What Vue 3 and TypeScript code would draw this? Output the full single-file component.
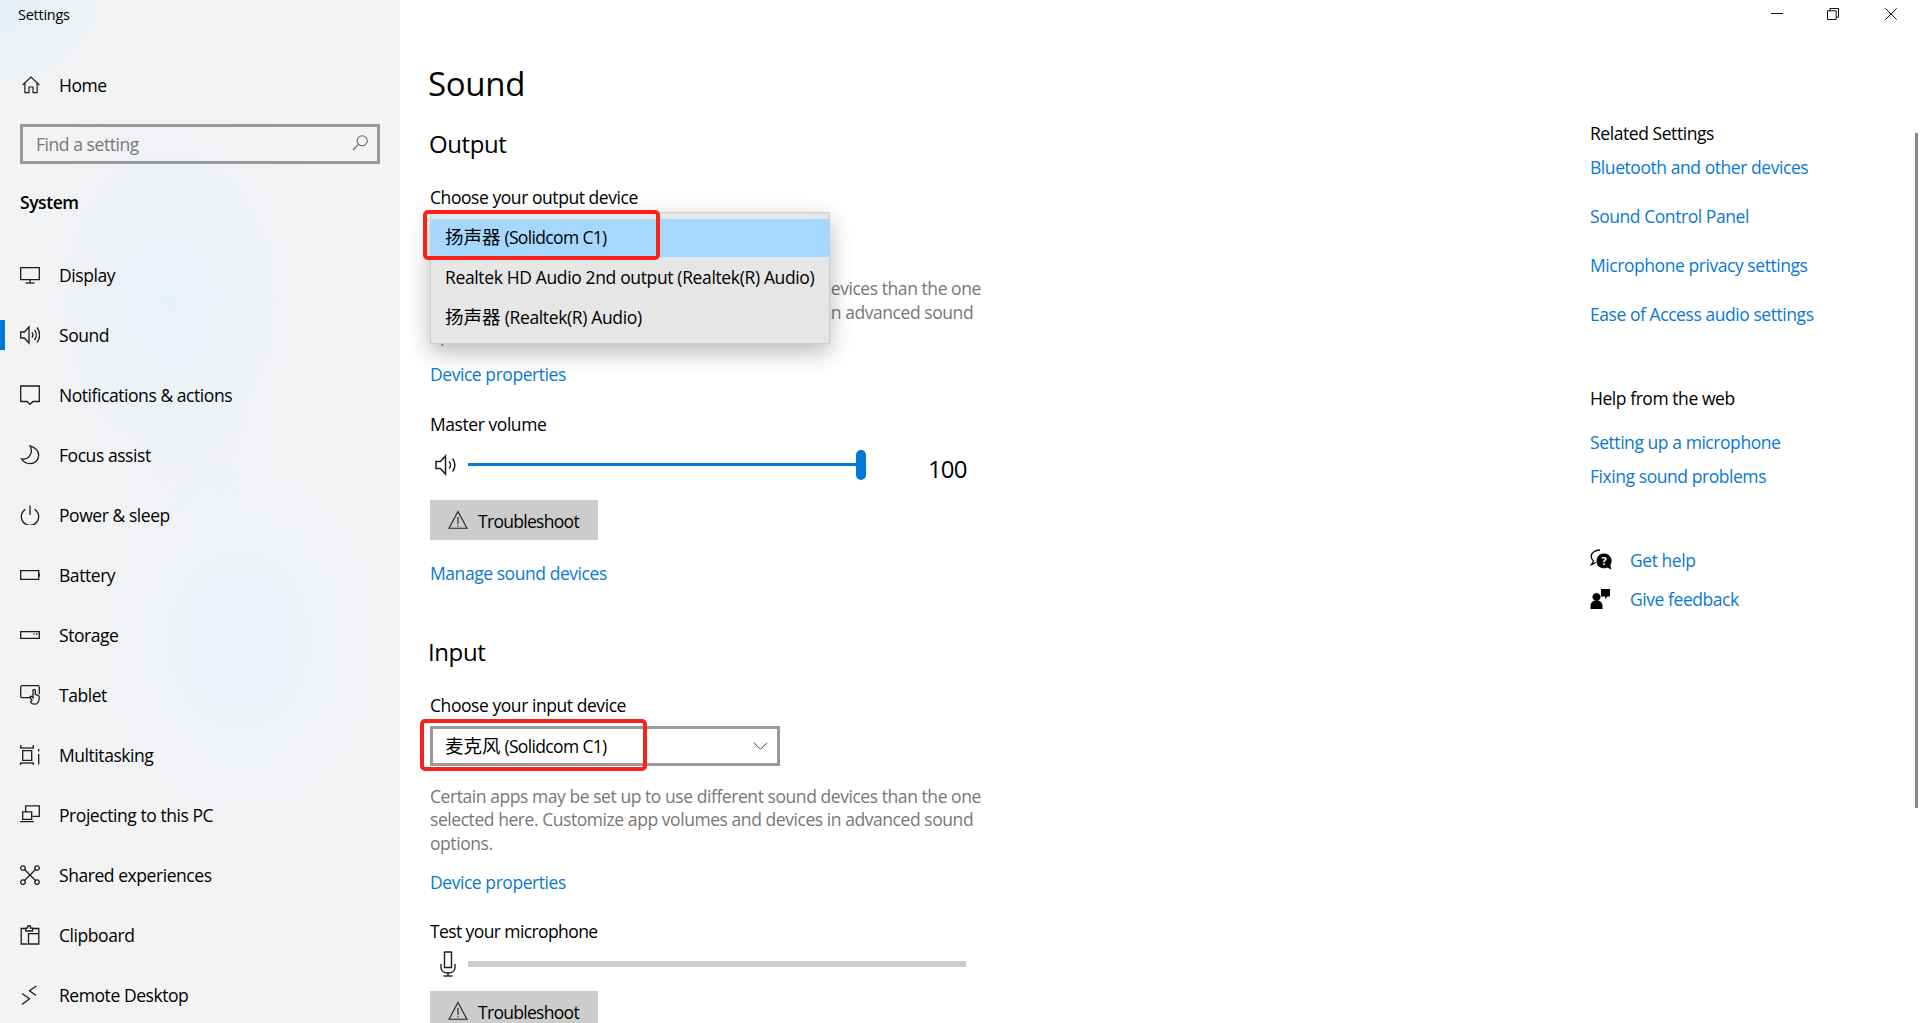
<script setup lang="ts">
interface NavItem { label: string; paths: string[]; active?: boolean }
const nav: NavItem[] = [
  { label: 'Display', paths: ['M.7 2.7h18.600v12H.7z', 'M10 14.700v3', 'M5.500 18h9'] },
  { label: 'Sound', active: true, paths: ['M.7 7h3.600L9 2v16l-4.700-5H.7z', 'M12 7.500a4 4 0 0 1 0 5', 'M14.500 5a8 8 0 0 1 0 10', 'M17 2.500a12 12 0 0 1 0 15'] },
  { label: 'Notifications & actions', paths: ['M.7 1h18.600v15.500H13L10 19.300 7 16.500H.7z'] },
  { label: 'Focus assist', paths: ['M10 .8c3.600 1.200 8.700 3.800 8.700 9.200 0 5-3.900 8.600-8.700 8.600-3.400 0-6.700-1.600-8.400-4.600 6.600 1.400 12.500-5.800 8.400-13.200z'] },
  { label: 'Power & sleep', paths: ['M10 .5v9.500', 'M5.500 4.200a8.700 8.700 0 1 0 9 0'] },
  { label: 'Battery', paths: ['M.7 5.700h18v8.600H.7z', 'M19.300 8.500v3'] },
  { label: 'Storage', paths: ['M.7 6.700h18.600v6.600H.7z', 'M13.500 9h1', 'M16 9h1.500'] },
  { label: 'Tablet', paths: ['M11 12.700H2.200a1.500 1.500 0 0 1-1.500-1.500V2.200A1.500 1.500 0 0 1 2.200.7h15.600a1.500 1.500 0 0 1 1.500 1.500v7', 'M12 15l-1.800-2.200c-.8-1 .6-2 1.500-1.200l1.300 1.200V5.500c0-1.500 2.300-1.500 2.300 0v4l2.400.6c1.400.4 1.800 1.200 1.600 2.600l-.4 2.300c-.4 2.600-2 4.200-4.200 4.200s-3.300-.7-4.200-2.200z'] },
  { label: 'Multitasking', paths: ['M0 3h14', 'M0 18h14', 'M2.700 5.700h9v9.600h-9z', 'M.7 0v3', 'M13.300 0v3', 'M.7 18v2', 'M13.300 18v2', 'M18.700 4v2.500', 'M18.700 9v10.500'] },
  { label: 'Projecting to this PC', paths: ['M5.700 7V.9h13.600v10.400H12.500', 'M2.700 6.800h9v7.500h-9z', 'M.2 16.600h13.600'] },
  { label: 'Shared experiences', paths: ['M4 4l12 12', 'M16 4L4 16', 'M3 .8a2.300 2.300 0 1 0 .01 0z', 'M17 .8a2.300 2.300 0 1 0 .01 0z', 'M3 14.800a2.300 2.300 0 1 0 .01 0z', 'M17 14.800a2.300 2.300 0 1 0 .01 0z'] },
  { label: 'Clipboard', paths: ['M7.500 19H1.200V3.500h4.600', 'M12.500 3.500h6.300V19H8.500V8.700h10.300', 'M5.700 6V3.200h2V1h2.800v2.200h2V6z'] },
  { label: 'Remote Desktop', paths: ['M2 8.500l7.500 5.300-7.500 5.700', 'M16.500 1L9.500 5.800l6.500 4.700'] },
]
const relatedLinks: string[] = ['Bluetooth and other devices', 'Sound Control Panel', 'Microphone privacy settings', 'Ease of Access audio settings']
const warn: string[] = ['M10 1.500L19 18.300H1z', 'M10 7v7', 'M10 15.300v1.200']
const desc = 'Certain apps may be set up to use different sound devices than the one selected here. Customize app volumes and devices in advanced sound options.'
</script>

<template>
  <div class="window">
    <aside class="sidebar">
      <div class="app-title">Settings</div>
      <div class="home">
        <svg class="icon home-icon" viewBox="0 0 20 20"><path d="M.7 10L10 1.300l9.300 8.700" /><path d="M3.200 7.800v10.600h4.600v-6.200h4.400v6.200h4.600V7.800" /></svg>
        <span>Home</span>
      </div>
      <div class="search">
        <span>Find a setting</span>
        <svg class="search-icon" viewBox="0 0 16 16"><path d="M10.200.8a5 5 0 1 0 .01 0z" /><path d="M6.600 9.300L1 15" /></svg>
      </div>
      <div class="system">System</div>
      <nav class="nav">
        <div v-for="item in nav" :key="item.label" class="nav-item" :class="{ active: item.active }">
          <svg class="icon" viewBox="0 0 20 20"><path v-for="d in item.paths" :key="d" :d="d" /></svg>
          <span>{{ item.label }}</span>
        </div>
      </nav>
    </aside>

    <main class="main">
      <h1 class="page-title">Sound</h1>
      <h2 class="section-title">Output</h2>
      <div class="label">Choose your output device</div>
      <div class="select-wrap">
        <div class="select">
          <span class="device"><span class="cjk">扬声器</span> (Solidcom C1)</span>
          <svg class="chev" viewBox="0 0 16 10"><path d="M1 1.500l7 7 7-7" /></svg>
        </div>
        <div class="popup">
          <div class="opt selected"><span class="device"><span class="cjk">扬声器</span> (Solidcom C1)</span></div>
          <div class="opt">Realtek HD Audio 2nd output (Realtek(R) Audio)</div>
          <div class="opt"><span class="cjk">扬声器</span> (Realtek(R) Audio)</div>
        </div>
        <div class="red red-output"></div>
      </div>
      <p class="desc">{{ desc }}</p>
      <a class="link props first-props">Device properties</a>
      <div class="label vol-label master-label">Master volume</div>
      <div class="slider-row">
        <svg class="row-icon" viewBox="0 0 22 22"><path d="M1 7.500h4.400L10.500 2v18l-5.100-5.500H1z" /><path d="M14 7.500a5 5 0 0 1 0 7" /><path d="M17.500 4.500a10 10 0 0 1 0 13" /></svg>
        <div class="track">
          <div class="track-line"></div>
          <div class="thumb"></div>
        </div>
        <span class="value">100</span>
      </div>
      <div class="btn first-btn">
        <svg class="warn" viewBox="0 0 20 20"><path v-for="d in warn" :key="d" :d="d" /></svg>
        <span class="btn-text">Troubleshoot</span>
      </div>
      <a class="link manage">Manage sound devices</a>

      <h2 class="section-title input-title">Input</h2>
      <div class="label">Choose your input device</div>
      <div class="select-wrap">
        <div class="select">
          <span class="device"><span class="cjk">麦克风</span> (Solidcom C1)</span>
          <svg class="chev" viewBox="0 0 16 10"><path d="M1 1.500l7 7 7-7" /></svg>
        </div>
        <div class="red red-input"></div>
      </div>
      <p class="desc">{{ desc }}</p>
      <a class="link props">Device properties</a>
      <div class="label vol-label mic-label">Test your microphone</div>
      <div class="mic-row">
        <svg class="mic" viewBox="0 0 18 26"><path d="M5.500 1h7v15.500h-7z" stroke-linejoin="round" /><path d="M2 13v3.500c0 3.300 3 5.500 7 5.500s7-2.200 7-5.500V13" /><path d="M9 22v3" /><path d="M4.500 25h9" /></svg>
        <div class="level"></div>
      </div>
      <div class="btn second-btn">
        <svg class="warn" viewBox="0 0 20 20"><path v-for="d in warn" :key="d" :d="d" /></svg>
        <span class="btn-text">Troubleshoot</span>
      </div>
    </main>

    <aside class="related">
      <div class="rel-head">Related Settings</div>
      <a v-for="(l, i) in relatedLinks" :key="l" class="link rel-link" :class="{ 'rel-first': i === 0 }">{{ l }}</a>
      <div class="rel-head web-head">Help from the web</div>
      <a class="link web-one">Setting up a microphone</a>
      <a class="link web-two">Fixing sound problems</a>
      <div class="help-row get-help">
        <svg class="help-icon" viewBox="0 0 22 22">
          <path class="thin" d="M10 1c-4.500 0-8.800 2.300-8.800 6.500 0 2 1 3.500 2.400 4.500L1.500 15.500l4.500-2" />
          <path class="solid" d="M14 4.500a7.500 7.500 0 0 0-4.500 13.500 7.500 7.500 0 0 0 7.500.5l4.500 2-1.200-4.300A7.500 7.500 0 0 0 14 4.500z" />
          <text x="14.200" y="16" class="q">?</text>
        </svg>
        <a class="link">Get help</a>
      </div>
      <div class="help-row give-feedback">
        <svg class="help-icon" viewBox="0 0 22 22">
          <path class="solid" d="M11 1h9v7.500h-2.500L15 11V8.500h-4z" />
          <path class="solid" d="M6.500 5a4 4 0 1 1-.01 0z" />
          <path class="solid" d="M.5 21v-3c0-3.500 2.300-5.500 6-5.500s6 2 6 5.500v3z" />
        </svg>
        <a class="link">Give feedback</a>
      </div>
    </aside>

    <div class="caption">
      <svg class="cap min" viewBox="0 0 12 12"><path d="M0 5.500h12" /></svg>
      <svg class="cap restore" viewBox="0 0 12 12"><path d="M.5 2.800h8.700v8.700H.5z" /><path d="M2.800 2.800V.5h8.700v8.700H9.200" /></svg>
      <svg class="cap close" viewBox="0 0 12 12"><path d="M.3.3l11.400 11.400" /><path d="M11.700.3L.3 11.700" /></svg>
    </div>
    <div class="scrollbar"></div>
  </div>
</template>

<style scoped>
.window {
  position: relative;
  display: flex;
  width: 1920px;
  height: 1023px;
  overflow: hidden;
  background: #fff;
  color: #000;
  font-family: "Open Sans", "Noto Sans CJK SC", sans-serif;
  font-size: 17.5px;
  letter-spacing: -0.44px;
  line-height: 24px;
}
.cjk {
  font-size: 18.5px;
  letter-spacing: 0;
}
.device {
  letter-spacing: -0.65px;
}
.device .cjk {
  letter-spacing: 0;
}
.sidebar {
  flex: 0 0 400px;
  box-sizing: border-box;
  background:
    radial-gradient(ellipse 130px 110px at 0 0, #e6eff8 0%, rgba(230, 239, 248, 0) 100%),
    radial-gradient(ellipse 170px 240px at 170px 300px, #eaf0f8 0%, rgba(234, 240, 248, 0) 100%),
    radial-gradient(ellipse 190px 240px at 240px 640px, #ecf1f9 0%, rgba(236, 241, 249, 0) 100%),
    #f3f3f3;
}
.app-title {
  height: 30px;
  line-height: 30px;
  padding-left: 18px;
  font-size: 14.5px;
  letter-spacing: -0.25px;
}
.home {
  display: flex;
  align-items: center;
  height: 60px;
  margin-top: 25px;
  padding-left: 22px;
  gap: 19px;
}
.icon {
  flex: none;
  width: 20px;
  height: 20px;
  fill: none;
  stroke: #1c1c1c;
  stroke-width: 1.3;
}
.home-icon {
  width: 18px;
  height: 18px;
}
.search {
  display: flex;
  align-items: center;
  justify-content: space-between;
  box-sizing: border-box;
  width: 360px;
  height: 40px;
  margin: 9px 0 0 20px;
  padding: 0 9px 0 13px;
  border: 3px solid #999;
  color: #777;
}
.search-icon {
  width: 16px;
  height: 16px;
  margin-bottom: 2px;
  fill: none;
  stroke: #666;
  stroke-width: 1.1;
}
.system {
  height: 40px;
  margin: 18px 0 0 20px;
  line-height: 40px;
  font-weight: 600;
}
.nav {
  margin-top: 23px;
}
.nav-item {
  position: relative;
  display: flex;
  align-items: center;
  height: 60px;
  padding-left: 20px;
  gap: 19px;
}
.nav-item.active::before {
  content: "";
  position: absolute;
  left: 0;
  top: 15px;
  width: 5px;
  height: 30px;
  background: #0078d7;
}
.main {
  flex: 0 0 1190px;
  box-sizing: border-box;
  padding: 53px 0 0 30px;
}
.page-title {
  height: 60px;
  margin: 0 0 0 -2px;
  font-size: 33px;
  font-weight: 400;
  line-height: 62px;
  letter-spacing: -0.3px;
}
.section-title {
  height: 40px;
  margin: 11px 0 0 -1px;
  font-size: 24px;
  font-weight: 400;
  line-height: 40px;
  letter-spacing: -0.4px;
}
.input-title {
  margin-top: 47px;
  margin-left: -2px;
}
.label {
  height: 24px;
  margin-top: 21px;
}
.vol-label {
  margin-top: 25px;
}
.master-label {
  margin-top: 26px;
}
.mic-label {
  letter-spacing: -0.6px;
}
.select-wrap {
  position: relative;
  width: 350px;
  margin-top: 9px;
}
.select {
  display: flex;
  align-items: center;
  justify-content: space-between;
  box-sizing: border-box;
  height: 40px;
  padding: 0 9px 0 12px;
  border: 3px solid #999;
}
.chev {
  width: 15px;
  height: 10px;
  fill: none;
  stroke: #333;
  stroke-width: 1;
}
.popup {
  position: absolute;
  left: 0;
  top: -6px;
  box-sizing: border-box;
  width: 400px;
  height: 132px;
  padding-top: 6px;
  background: #e6e6e6;
  border: 1px solid #ccc;
  box-shadow: 0 8px 22px rgba(0, 0, 0, 0.28);
}
.opt {
  height: 40px;
  padding-left: 14px;
  line-height: 36px;
  white-space: nowrap;
  letter-spacing: -0.36px;
}
.opt.selected {
  height: 38px;
  margin-bottom: 2px;
  background: #a6d8ff;
}
.red {
  position: absolute;
  box-sizing: border-box;
  border: 4px solid #f5231a;
  border-radius: 5px;
}
.red-output {
  left: -7px;
  top: -8px;
  width: 237px;
  height: 50px;
}
.red-input {
  left: -10px;
  top: -7px;
  width: 227px;
  height: 52px;
}
.desc {
  width: 560px;
  margin: 19px 0 0;
  color: #777;
  line-height: 23.5px;
}
.link {
  display: block;
  height: 24px;
  color: #0a78d4;
}
.props {
  margin-top: 15px;
}
.first-props {
  margin-top: 14px;
}
.slider-row {
  display: flex;
  align-items: center;
  height: 30px;
  margin-top: 14px;
}
.row-icon {
  flex: none;
  width: 22px;
  height: 22px;
  margin-left: 5px;
  fill: none;
  stroke: #1c1c1c;
  stroke-width: 1.5;
}
.track {
  position: relative;
  flex: none;
  width: 398px;
  height: 30px;
  margin-left: 11px;
}
.track-line {
  position: absolute;
  left: 0;
  right: 4px;
  top: 13px;
  height: 3.5px;
  background: #0078d7;
}
.thumb {
  position: absolute;
  right: 0;
  top: 0;
  width: 10px;
  height: 30px;
  border-radius: 5px;
  background: #0078d7;
}
.value {
  margin: 9px 0 0 62px;
  font-size: 24px;
  letter-spacing: -0.9px;
}
.btn {
  display: flex;
  align-items: center;
  box-sizing: border-box;
  width: 168px;
  height: 40px;
  padding-left: 18px;
  background: #ccc;
  gap: 10px;
}
.btn-text {
  padding-top: 2px;
  letter-spacing: -0.7px;
}
.first-btn {
  margin-top: 20px;
}
.second-btn {
  margin-top: 12px;
}
.warn {
  width: 20px;
  height: 20px;
  fill: none;
  stroke: #222;
  stroke-width: 1.1;
}
.manage {
  margin-top: 21px;
}
.mic-row {
  display: flex;
  align-items: center;
  height: 30px;
  margin-top: 6px;
}
.mic {
  flex: none;
  width: 18px;
  height: 26px;
  margin-left: 9px;
  fill: none;
  stroke: #1c1c1c;
  stroke-width: 1.4;
}
.level {
  flex: none;
  width: 498px;
  height: 6px;
  margin-left: 11px;
  background: #ccc;
}
.related {
  flex: 1;
  padding-top: 121px;
}
.rel-head {
  height: 24px;
}
.rel-link {
  margin-top: 25px;
}
.rel-link.rel-first {
  margin-top: 10px;
}
.web-head {
  margin-top: 60px;
}
.web-one {
  margin-top: 20px;
}
.web-two {
  margin-top: 10px;
}
.help-row {
  display: flex;
  align-items: center;
  height: 24px;
  gap: 18px;
}
.get-help {
  margin-top: 60px;
}
.give-feedback {
  margin-top: 15px;
}
.help-icon {
  flex: none;
  width: 22px;
  height: 22px;
}
.thin {
  fill: none;
  stroke: #000;
  stroke-width: 1.3;
}
.solid {
  fill: #000;
}
.q {
  fill: #fff;
  font-size: 11px;
  font-weight: 700;
  text-anchor: middle;
  letter-spacing: 0;
}
.caption {
  position: absolute;
  top: 0;
  right: 0;
}
.cap {
  position: absolute;
  top: 8px;
  width: 12px;
  height: 12px;
  fill: none;
  stroke: #111;
  stroke-width: 1;
}
.min {
  right: 137px;
}
.restore {
  right: 81px;
}
.close {
  right: 23px;
}
.scrollbar {
  position: absolute;
  right: 2px;
  top: 133px;
  width: 3px;
  height: 675px;
  background: #888;
}
</style>
